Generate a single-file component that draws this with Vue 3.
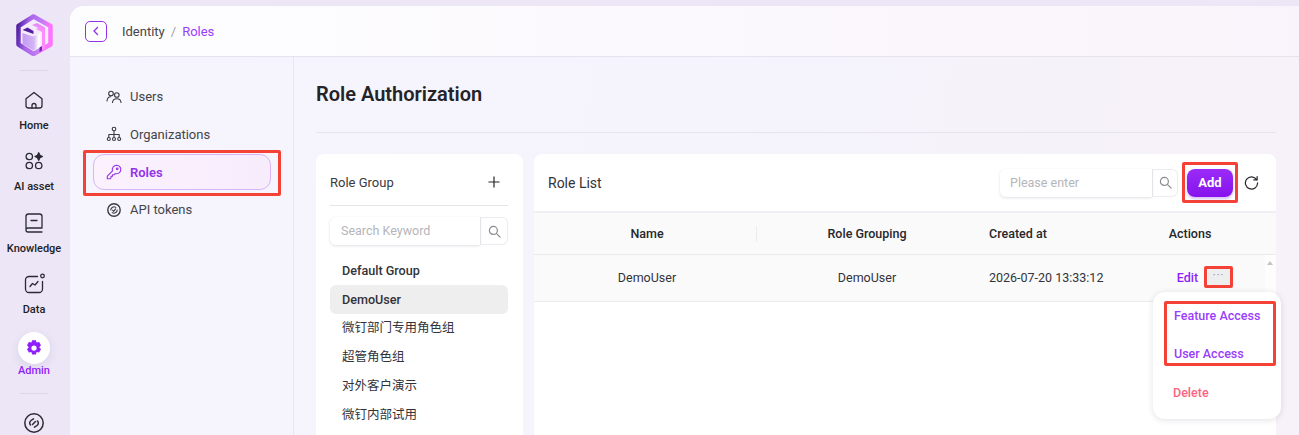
<script setup>
const rail = [
  { label: 'Home', icon: 'home' },
  { label: 'AI asset', icon: 'asset' },
  { label: 'Knowledge', icon: 'book' },
  { label: 'Data', icon: 'data' }
]
const menu = [
  { label: 'Users', icon: 'users' },
  { label: 'Organizations', icon: 'org' },
  { label: 'Roles', icon: 'key', active: true },
  { label: 'API tokens', icon: 'token' }
]
const groups = ['Default Group', 'DemoUser', '微钉部门专用角色组', '超管角色组', '对外客户演示', '微钉内部试用']
</script>

<template>
  <div class="page">
    <aside class="rail">
      <svg class="logo" width="38" height="42" viewBox="0 0 38 42">
        <defs>
          <linearGradient id="lg" x1="0" y1="0" x2="1" y2="0.2">
            <stop offset="0" stop-color="#4c1a9e" />
            <stop offset="0.35" stop-color="#a765ea" />
            <stop offset="0.7" stop-color="#bd7cf2" />
            <stop offset="1" stop-color="#ff74ff" />
          </linearGradient>
          <linearGradient id="face" x1="0" y1="0" x2="1" y2="0">
            <stop offset="0" stop-color="#c49af2" />
            <stop offset="0.5" stop-color="#d4b4f6" />
            <stop offset="0.72" stop-color="#fff" />
            <stop offset="1" stop-color="#fbd2fe" />
          </linearGradient>
        </defs>
        <path d="M18.500 2.500 35.500 12V30.500L18.500 40 3.500 30.500V12Z" fill="#f4ecfd" stroke="url(#lg)" stroke-width="4.500" stroke-linejoin="round" />
        <path d="M7.500 19 18 22.500 30 17V30L18.500 36.500 7.500 30Z" fill="url(#face)" />
        <path d="M17 11 22 9 30 13.500V18L26 16 26 15z" fill="#e98cf9" />
        <path d="M21 15 25 13 30 16V35L27 36.500V18z" fill="#ff8cfb" />
        <path d="M7.500 16 12.500 13.500 18.500 17 18.500 20 13 18z" fill="#55209f" />
        <path d="M24.500 33.500 27 32V36.500L24.500 38z" fill="#6b2db8" />
      </svg>
      <div class="rail-line"></div>
      <div v-for="r in rail" :key="r.label" class="rail-item">
        <svg width="24" height="24" viewBox="0 0 24 24" fill="none" stroke="#2b2b33" stroke-width="1.300" stroke-linecap="round" stroke-linejoin="round">
          <template v-if="r.icon === 'home'">
            <path d="M4 10.800 12 4.500l8 6.300V17.500a2.500 2.500 0 0 1-2.500 2.500h-11A2.500 2.500 0 0 1 4 17.500z" />
            <path d="M10 20v-2.500a2 2 0 0 1 4 0V20" />
          </template>
          <template v-else-if="r.icon === 'asset'">
            <circle cx="7.300" cy="7.500" r="3.200" />
            <circle cx="7.300" cy="16.500" r="3.200" />
            <circle cx="16.700" cy="16.500" r="3.200" />
            <path d="M16.700 3.800l1.200 2.500 2.500 1.200-2.500 1.200-1.200 2.500-1.200-2.500-2.500-1.200 2.500-1.200z" fill="#2b2b33" />
          </template>
          <template v-else-if="r.icon === 'book'">
            <path d="M4 18V5.500A2.500 2.500 0 0 1 6.500 3h11A2.500 2.500 0 0 1 20 5.500V17H6a2 2 0 0 0-2 2 2 2 0 0 0 2 2h14" />
            <path d="M9 9.500h6" />
          </template>
          <template v-else-if="r.icon === 'data'">
            <path d="M15.500 4.500H7a3.500 3.500 0 0 0-3.500 3.500v9A3.500 3.500 0 0 0 7 20.500h10a3.500 3.500 0 0 0 3.500-3.500V9.500" />
            <circle cx="20.500" cy="4" r="1.800" />
            <path d="M8 14.500l2.500-3 2.500 1.500 3-3.500" />
          </template>
        </svg>
        <span>{{ r.label }}</span>
      </div>
      <div class="rail-item admin">
        <div class="admin-badge">
          <svg width="18" height="18" viewBox="0 0 24 24">
            <path fill="#8f1ffb" fill-rule="evenodd" d="M9.500 1.500h5l1 3.200 3.300-.8 2.500 4.300-2.300 2.800 2.300 2.800-2.500 4.300-3.300-.8-1 3.200h-5l-1-3.200-3.300.8-2.500-4.300 2.300-2.800-2.300-2.800 2.500-4.300 3.300.8zM12 8.500a3.500 3.500 0 1 0 0 7 3.500 3.500 0 0 0 0-7z" />
          </svg>
        </div>
        <span>Admin</span>
      </div>
      <div class="rail-line second"></div>
      <svg class="rail-last" width="24" height="24" viewBox="0 0 24 24" fill="none" stroke="#2b2b33" stroke-width="1.500" stroke-linecap="round">
        <circle cx="12" cy="12" r="9.200" />
        <path d="M8.500 14a3 3 0 0 1 .5-4.500l2.500-1.700M15.500 10a3 3 0 0 1-.5 4.500l-2.500 1.700M10.500 13.500l3-3" />
      </svg>
    </aside>

    <div class="shell">
      <header class="topbar">
        <button class="back">
          <svg width="12" height="12" viewBox="0 0 12 12" fill="none" stroke="#9333ea" stroke-width="1.400" stroke-linecap="round" stroke-linejoin="round">
            <path d="M7.500 2.500 4 6l3.500 3.500" />
          </svg>
        </button>
        <span class="crumb">Identity</span>
        <span class="sep">/</span>
        <span class="crumb current">Roles</span>
      </header>

      <div class="body">
        <nav class="side">
          <div v-for="m in menu" :key="m.label" class="side-item" :class="{ active: m.active }">
            <svg width="16" height="16" viewBox="0 0 16 16" fill="none" :stroke="m.active ? '#9333ea' : '#3a3a42'" stroke-width="1.100" stroke-linecap="round" stroke-linejoin="round">
              <template v-if="m.icon === 'users'">
                <circle cx="5" cy="4.500" r="2.300" />
                <circle cx="10.800" cy="6" r="2.300" />
                <path d="M1 12c.2-2.800 1.700-4.200 3.700-4.200M6.500 13.500c.2-2.500 2-3.800 4.300-3.800s4 1.300 4.200 3.800" />
              </template>
              <template v-else-if="m.icon === 'org'">
                <circle cx="8" cy="3" r="1.800" />
                <circle cx="2.800" cy="13" r="1.500" />
                <circle cx="8" cy="13" r="1.500" />
                <circle cx="13.200" cy="13" r="1.500" />
                <path d="M8 5v6M2.800 11V8.500h10.400V11" />
              </template>
              <template v-else-if="m.icon === 'key'">
                <path d="M10.500 1.200a4.300 4.300 0 1 1-1.300 8.400L8 10.800H6.500v1.500H5v1.500l-1 1H1.300v-2.700l5.200-5.200a4.300 4.300 0 0 1 4-5.700z" />
                <circle cx="11.200" cy="4.800" r=".8" />
              </template>
              <template v-else>
                <circle cx="8" cy="8" r="6.200" stroke-width="1.400" />
                <path d="M4.800 8a3.200 3.200 0 0 1 5-2.600M11.200 8a3.200 3.200 0 0 1-5 2.600M6.600 8.200 7.700 9.300 9.600 6.900" />
              </template>
            </svg>
            <span>{{ m.label }}</span>
          </div>
        </nav>

        <main class="content">
          <h1>Role Authorization</h1>
          <div class="divider"></div>
          <div class="panels">
            <section class="groups">
              <div class="groups-head">
                <span>Role Group</span>
                <svg width="12" height="12" viewBox="0 0 12 12" stroke="#26262c" stroke-width="1.200"><path d="M6 .5v11M.5 6h11" /></svg>
              </div>
              <div class="search">
                <div class="search-input">Search Keyword</div>
                <div class="search-btn">
                  <svg width="13" height="13" viewBox="0 0 14 14" fill="none" stroke="#8a8a90" stroke-width="1.300" stroke-linecap="round"><circle cx="5.800" cy="5.800" r="4.300" /><path d="M9 9l4 4" /></svg>
                </div>
              </div>
              <div v-for="g in groups" :key="g" class="group" :class="{ picked: g === 'DemoUser', latin: g === 'DemoUser' || g === 'Default Group' }">{{ g }}</div>
            </section>

            <section class="list">
              <div class="list-head">
                <span class="list-title">Role List</span>
                <div class="tools">
                  <div class="search small">
                    <div class="search-input">Please enter</div>
                    <div class="search-btn">
                      <svg width="13" height="13" viewBox="0 0 14 14" fill="none" stroke="#8a8a90" stroke-width="1.300" stroke-linecap="round"><circle cx="5.800" cy="5.800" r="4.300" /><path d="M9 9l4 4" /></svg>
                    </div>
                  </div>
                  <div class="mark add-mark"><button class="add">Add</button></div>
                  <svg class="refresh" width="15" height="15" viewBox="0 0 16 16" fill="none" stroke="#26262c" stroke-width="1.300" stroke-linecap="round">
                    <path d="M13.500 5A6.500 6.500 0 1 0 14.500 8.500" />
                    <path d="M14 1.800V5.300h-3.500" />
                  </svg>
                </div>
              </div>
              <div class="row thead">
                <div class="first">Name</div>
                <div class="grouping">Role Grouping</div>
                <div class="created">Created at</div>
                <div>Actions</div>
              </div>
              <div class="row tbody">
                <div class="first">DemoUser</div>
                <div>DemoUser</div>
                <div class="created">2026-07-20 13:33:12</div>
                <div class="actions">
                  <span class="edit">Edit</span>
                  <span class="mark more-mark"><span class="more">···</span></span>
                </div>
                <i class="scroll-up"></i>
              </div>
            </section>
          </div>
        </main>
      </div>
    </div>

    <div class="dropdown">
      <div class="mark drop-mark">
        <div class="drop-item">Feature Access</div>
        <div class="drop-item">User Access</div>
      </div>
      <div class="drop-item danger">Delete</div>
    </div>
    <div class="side-mark"></div>
  </div>
</template>

<style>
body { margin: 0; overflow: hidden; }
</style>

<style scoped>
.page {
  position: relative;
  display: flex;
  width: 1299px;
  height: 435px;
  overflow: hidden;
  background: #ece6f6;
  color: #26262c;
  font-family: Roboto, "Noto Sans CJK SC", sans-serif;
  font-size: 13px;
}
.rail {
  flex: none;
  width: 70px;
  display: flex;
  flex-direction: column;
  align-items: center;
  padding: 14px 2px 0 0;
  box-sizing: border-box;
}
.logo { flex: none; }
.rail-line {
  flex: none;
  width: 28px;
  height: 1px;
  background: #dcd6e6;
  margin: 14px 0 17px;
}
.rail-line.second { margin: 16px 0 17px; }
.rail-item {
  flex: none;
  height: 61.300px;
  display: flex;
  flex-direction: column;
  align-items: center;
  gap: 7px;
  font-size: 11px;
  font-weight: 500;
  color: #1e1e24;
}
.rail-item.admin { color: #8f1ffb; gap: 0; height: auto; margin-top: -1px; }
.admin-badge {
  width: 32px;
  height: 32px;
  border-radius: 50%;
  background: #fff;
  display: flex;
  align-items: center;
  justify-content: center;
  box-shadow: 0 3px 10px rgba(100, 70, 160, 0.12);
}
.rail-last { flex: none; }
.shell {
  flex: 1;
  margin-top: 6px;
  border-top-left-radius: 14px;
  background: linear-gradient(100deg, #f6f4fc 0%, #f5f3fb 60%, #f7f1f9 100%);
  display: flex;
  flex-direction: column;
  min-width: 0;
}
.topbar {
  flex: none;
  height: 50px;
  display: flex;
  align-items: center;
  padding-left: 15px;
  background: linear-gradient(90deg, #fdfdfe, #f9f4fb);
  border-bottom: 1px solid #e6e3ee;
  border-top-left-radius: 14px;
}
.back {
  width: 22px;
  height: 21px;
  padding: 0;
  border: 1px solid #9333ea;
  border-radius: 5px;
  background: #fff;
  display: flex;
  align-items: center;
  justify-content: center;
  margin-right: 15px;
}
.crumb { color: #444449; }
.crumb.current { color: #9a3dfb; }
.sep { color: #a0a0a6; margin: 0 6px; }
.body { flex: 1; display: flex; min-height: 0; }
.side {
  flex: none;
  width: 224px;
  box-sizing: border-box;
  padding: 21px 22px 0 23px;
  border-right: 1px solid #e8e6ef;
  display: flex;
  flex-direction: column;
  gap: 0.700px;
}
.side-item {
  position: relative;
  height: 37px;
  display: flex;
  align-items: center;
  gap: 8px;
  padding-left: 13px;
  box-sizing: border-box;
  color: #444449;
}
.side-item.active {
  height: 36px;
  margin-top: 1px;
  color: #9333ea;
  font-weight: 600;
  background: linear-gradient(90deg, #fbf2fe, #f7ecfc);
  border: 1px solid #d8b4f8;
  border-radius: 11px;
  padding-left: 12px;
}
.side-mark {
  position: absolute;
  left: 83px;
  top: 150px;
  width: 198px;
  height: 46px;
  box-sizing: border-box;
  border: 3px solid #f44336;
  border-radius: 2px;
  pointer-events: none;
}
.content {
  flex: 1;
  min-width: 0;
  padding: 0 23px 0 22px;
  display: flex;
  flex-direction: column;
}
h1 {
  flex: none;
  margin: 0;
  padding-top: 25px;
  height: 50px;
  font-size: 20px;
  line-height: 25px;
  font-weight: 600;
  color: #232328;
}
.divider { flex: none; height: 1px; background: #e6e3ec; }
.panels { flex: none; display: flex; gap: 11px; margin-top: 21px; }
.groups {
  flex: none;
  width: 207px;
  height: 300px;
  box-sizing: border-box;
  background: #fff;
  border-radius: 8px;
  padding: 0 15px 0 14px;
}
.groups-head {
  height: 52px;
  display: flex;
  align-items: center;
  justify-content: space-between;
  padding: 5px 8px 0 0;
  box-sizing: border-box;
  border-bottom: 1px solid #e5e5e8;
  color: #3a3a40;
}
.search { display: flex; height: 28px; margin-top: 11px; }
.search-input {
  flex: 1;
  box-sizing: border-box;
  border-radius: 6px 0 0 6px;
  padding-left: 11px;
  line-height: 27px;
  font-size: 12.500px;
  color: #b5b5ba;
  background: #fff;
  box-shadow: 0 1px 3px rgba(60, 50, 90, 0.16);
}
.search-btn {
  flex: none;
  width: 28px;
  box-sizing: border-box;
  border: 1px solid #ececf0;
  border-left: 1px solid #e4e4e8;
  border-radius: 0 6px 6px 0;
  display: flex;
  align-items: center;
  justify-content: center;
}
.group {
  height: 29px;
  line-height: 27px;
  padding-left: 12px;
  color: #33333a;
  font-size: 12.500px;
}
.group.latin { font-weight: 500; line-height: 29px; font-size: 12.600px; }
.search + .group { margin-top: 11px; }
.group.picked { background: #eeeeee; border-radius: 6px; }
.list {
  flex: 1;
  min-width: 0;
  height: 300px;
  background: #fff;
  border-top-left-radius: 8px;
  border-top-right-radius: 8px;
}
.list-head {
  height: 57px;
  display: flex;
  align-items: center;
  justify-content: space-between;
  padding: 0 17px 0 14px;
  border-bottom: 2px solid #f0eff3;
}
.list-title { font-size: 14px; color: #33333a; }
.tools { display: flex; align-items: center; }
.search.small { width: 178px; margin-top: 0; }
.search.small .search-input { padding-left: 10px; }
.search.small .search-btn { width: 26px; }
.mark { border: 3px solid #f44336; border-radius: 2px; box-sizing: border-box; }
.add-mark { margin-left: 4px; height: 41px; width: 56px; display: flex; align-items: center; justify-content: center; }
.add {
  width: 46px;
  height: 28px;
  border: 0;
  border-radius: 8px;
  background: linear-gradient(180deg, #9a2bf8, #8713ec);
  box-shadow: 0 2px 3px rgba(120, 40, 220, 0.3);
  color: #fff;
  font: 700 13px Roboto, sans-serif;
  padding: 0;
}
.refresh { margin-left: 6px; }
.row {
  position: relative;
  display: grid;
  grid-template-columns: 222px 222px 126px 1fr;
  align-items: center;
  text-align: center;
  font-size: 12.500px;
}
.first { padding-left: 4px; }
.thead {
  height: 41px;
  background: #fafafa;
  border-bottom: 1px solid #e9e9ee;
  font-weight: 500;
  color: #26262c;
}
.grouping { border-left: 1px solid #ececf0; height: 16px; line-height: 16px; padding-right: 1px; }
.created { text-align: left; padding-left: 11px; white-space: nowrap; }
.tbody {
  height: 47px;
  padding-bottom: 2px;
  box-sizing: border-box;
  background: #fafafa;
  border-bottom: 1px solid #e9e9ee;
  color: #33333a;
}
.actions { display: flex; justify-content: center; align-items: center; gap: 6px; padding-left: 30px; }
.edit { color: #8f1ffb; font-weight: 500; }
.more-mark { display: flex; width: 29px; height: 22px; align-items: center; justify-content: center; }
.more {
  width: 22px;
  height: 16px;
  line-height: 14px;
  background: #eeeeee;
  color: #85858a;
  font-size: 11px;
  letter-spacing: 1px;
  border-radius: 2px;
}
.scroll-up {
  position: absolute;
  right: 0;
  top: 0;
  bottom: 0;
  width: 11px;
  background: #fdfdfd;
}
.scroll-up::after {
  content: "";
  position: absolute;
  left: 2px;
  top: 6px;
  border-left: 3px solid transparent;
  border-right: 3px solid transparent;
  border-bottom: 4px solid #c4c4c8;
}
.dropdown {
  position: absolute;
  left: 1153px;
  top: 292px;
  width: 128px;
  height: 127px;
  box-sizing: border-box;
  padding: 9px 5px 0 11px;
  background: #fff;
  border-radius: 12px;
  box-shadow: 0 1px 6px rgba(50, 40, 80, 0.14);
  font-size: 12.500px;
  font-weight: 500;
}
.drop-mark { width: 112px; height: 65px; padding: 4px 0 0 7px; }
.drop-mark .drop-item + .drop-item { margin-top: 23px; }
.drop-item { color: #9a3dfb; line-height: 15px; }
.drop-item.danger { color: #fb6580; margin: 19px 0 0 9px; }
</style>
